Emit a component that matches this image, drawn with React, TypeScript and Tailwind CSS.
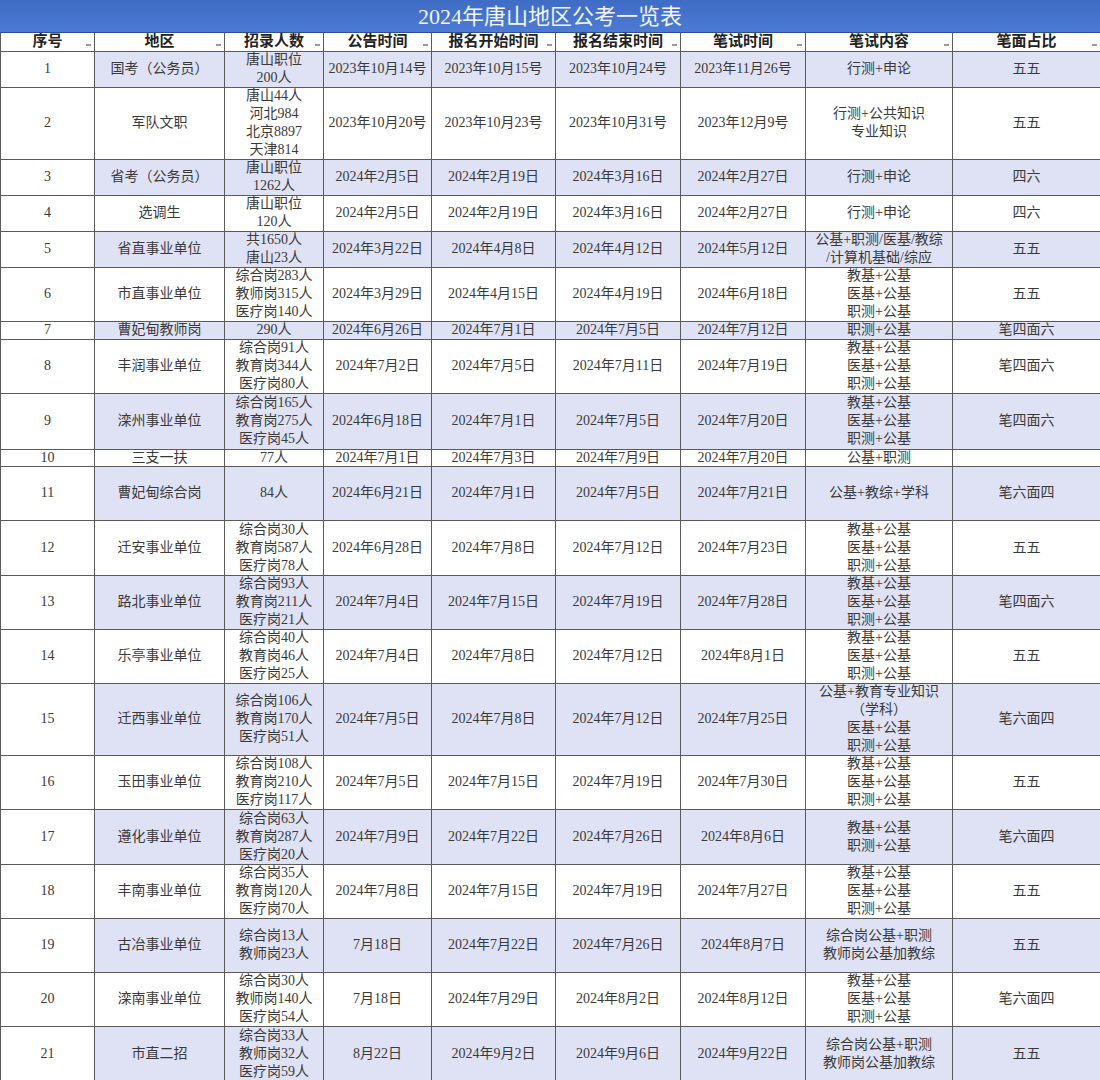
import React from 'react';

type Row = {
  h: string;
  area: string;
  count: string;
  notice: string;
  start: string;
  end: string;
  exam: string;
  content: string;
  ratio: string;
};

const headers = ['序号', '地区', '招录人数', '公告时间', '报名开始时间', '报名结束时间', '笔试时间', '笔试内容', '笔面占比'];

// h = inner height of the row (the 1px grid line comes on top)
const rows: Row[] = [
  { h: 'h-[35px]', area: '国考（公务员）', count: '唐山职位\n200人', notice: '2023年10月14号', start: '2023年10月15号', end: '2023年10月24号', exam: '2023年11月26号', content: '行测+申论', ratio: '五五' },
  { h: 'h-[71px]', area: '军队文职', count: '唐山44人\n河北984\n北京8897\n天津814', notice: '2023年10月20号', start: '2023年10月23号', end: '2023年10月31号', exam: '2023年12月9号', content: '行测+公共知识\n专业知识', ratio: '五五' },
  { h: 'h-[35px]', area: '省考（公务员）', count: '唐山职位\n1262人', notice: '2024年2月5日', start: '2024年2月19日', end: '2024年3月16日', exam: '2024年2月27日', content: '行测+申论', ratio: '四六' },
  { h: 'h-[35px]', area: '选调生', count: '唐山职位\n120人', notice: '2024年2月5日', start: '2024年2月19日', end: '2024年3月16日', exam: '2024年2月27日', content: '行测+申论', ratio: '四六' },
  { h: 'h-[35px]', area: '省直事业单位', count: '共1650人\n唐山23人', notice: '2024年3月22日', start: '2024年4月8日', end: '2024年4月12日', exam: '2024年5月12日', content: '公基+职测/医基/教综\n/计算机基础/综应', ratio: '五五' },
  { h: 'h-[53px]', area: '市直事业单位', count: '综合岗283人\n教师岗315人\n医疗岗140人', notice: '2024年3月29日', start: '2024年4月15日', end: '2024年4月19日', exam: '2024年6月18日', content: '教基+公基\n医基+公基\n职测+公基', ratio: '五五' },
  { h: 'h-[17px]', area: '曹妃甸教师岗', count: '290人', notice: '2024年6月26日', start: '2024年7月1日', end: '2024年7月5日', exam: '2024年7月12日', content: '职测+公基', ratio: '笔四面六' },
  { h: 'h-[53px]', area: '丰润事业单位', count: '综合岗91人\n教育岗344人\n医疗岗80人', notice: '2024年7月2日', start: '2024年7月5日', end: '2024年7月11日', exam: '2024年7月19日', content: '教基+公基\n医基+公基\n职测+公基', ratio: '笔四面六' },
  { h: 'h-[55px]', area: '滦州事业单位', count: '综合岗165人\n教育岗275人\n医疗岗45人', notice: '2024年6月18日', start: '2024年7月1日', end: '2024年7月5日', exam: '2024年7月20日', content: '教基+公基\n医基+公基\n职测+公基', ratio: '笔四面六' },
  { h: 'h-[16px]', area: '三支一扶', count: '77人', notice: '2024年7月1日', start: '2024年7月3日', end: '2024年7月9日', exam: '2024年7月20日', content: '公基+职测', ratio: '' },
  { h: 'h-[53px]', area: '曹妃甸综合岗', count: '84人', notice: '2024年6月21日', start: '2024年7月1日', end: '2024年7月5日', exam: '2024年7月21日', content: '公基+教综+学科', ratio: '笔六面四' },
  { h: 'h-[54px]', area: '迁安事业单位', count: '综合岗30人\n教育岗587人\n医疗岗78人', notice: '2024年6月28日', start: '2024年7月8日', end: '2024年7月12日', exam: '2024年7月23日', content: '教基+公基\n医基+公基\n职测+公基', ratio: '五五' },
  { h: 'h-[53px]', area: '路北事业单位', count: '综合岗93人\n教育岗211人\n医疗岗21人', notice: '2024年7月4日', start: '2024年7月15日', end: '2024年7月19日', exam: '2024年7月28日', content: '教基+公基\n医基+公基\n职测+公基', ratio: '笔四面六' },
  { h: 'h-[53px]', area: '乐亭事业单位', count: '综合岗40人\n教育岗46人\n医疗岗25人', notice: '2024年7月4日', start: '2024年7月8日', end: '2024年7月12日', exam: '2024年8月1日', content: '教基+公基\n医基+公基\n职测+公基', ratio: '五五' },
  { h: 'h-[71px]', area: '迁西事业单位', count: '综合岗106人\n教育岗170人\n医疗岗51人', notice: '2024年7月5日', start: '2024年7月8日', end: '2024年7月12日', exam: '2024年7月25日', content: '公基+教育专业知识\n（学科）\n医基+公基\n职测+公基', ratio: '笔六面四' },
  { h: 'h-[53px]', area: '玉田事业单位', count: '综合岗108人\n教育岗210人\n医疗岗117人', notice: '2024年7月5日', start: '2024年7月15日', end: '2024年7月19日', exam: '2024年7月30日', content: '教基+公基\n医基+公基\n职测+公基', ratio: '五五' },
  { h: 'h-[54px]', area: '遵化事业单位', count: '综合岗63人\n教育岗287人\n医疗岗20人', notice: '2024年7月9日', start: '2024年7月22日', end: '2024年7月26日', exam: '2024年8月6日', content: '教基+公基\n职测+公基', ratio: '笔六面四' },
  { h: 'h-[53px]', area: '丰南事业单位', count: '综合岗35人\n教育岗120人\n医疗岗70人', notice: '2024年7月8日', start: '2024年7月15日', end: '2024年7月19日', exam: '2024年7月27日', content: '教基+公基\n医基+公基\n职测+公基', ratio: '五五' },
  { h: 'h-[53px]', area: '古冶事业单位', count: '综合岗13人\n教师岗23人', notice: '7月18日', start: '2024年7月22日', end: '2024年7月26日', exam: '2024年8月7日', content: '综合岗公基+职测\n教师岗公基加教综', ratio: '五五' },
  { h: 'h-[53px]', area: '滦南事业单位', count: '综合岗30人\n教师岗140人\n医疗岗54人', notice: '7月18日', start: '2024年7月29日', end: '2024年8月2日', exam: '2024年8月12日', content: '教基+公基\n医基+公基\n职测+公基', ratio: '笔六面四' },
  { h: 'h-[55px]', area: '市直二招', count: '综合岗33人\n教师岗32人\n医疗岗59人', notice: '8月22日', start: '2024年9月2日', end: '2024年9月6日', exam: '2024年9月22日', content: '综合岗公基+职测\n教师岗公基加教综', ratio: '五五' },
];

const td = 'border border-[#5a5a5a] p-0 align-middle';

const Cell: React.FC<{ h: string; bg: string; children: React.ReactNode }> = ({ h, bg, children }) => (
  <td className={`${td} ${bg}`}>
    {/* fixed-height box: extra lines spill over the grid line like in the sheet */}
    <div className={`${h} flex flex-col items-center justify-center overflow-visible whitespace-pre-line text-center leading-[18px] text-[14px] text-[#3a3a3a]`}>
      {children}
    </div>
  </td>
);

const App: React.FC = () => {
  return (
    <div className="w-[1100px] h-[1080px] overflow-hidden bg-white font-['Liberation_Serif','Noto_Sans_CJK_SC',serif]">
      {/* title bar */}
      <div className="h-[33px] bg-gradient-to-b from-[#3f6cc4] to-[#4b7bd4] border-b border-[#2f4f8f] text-center text-[22px] leading-[33px] text-[#f2f5ff]">
        2024年唐山地区公考一览表
      </div>

      <table className="w-[1100px] table-fixed border-collapse">
        <colgroup>
          <col className="w-[94px]" />
          <col className="w-[130px]" />
          <col className="w-[99px]" />
          <col className="w-[108px]" />
          <col className="w-[124px]" />
          <col className="w-[125px]" />
          <col className="w-[125px]" />
          <col className="w-[147px]" />
          <col className="w-[148px]" />
        </colgroup>
        <thead>
          <tr>
            {headers.map((h) => (
              <th key={h} className="relative border border-[#5a5a5a] border-t-0 p-0 bg-white text-center text-[15px] leading-[17px] h-[18px] font-bold text-[#222]">
                {h}
                <span className="absolute right-[3px] bottom-[5px] w-[5px] h-[2px] bg-[#9a9a9a]" />
              </th>
            ))}
          </tr>
        </thead>
        <tbody>
          {rows.map((r, i) => {
            const shade = i % 2 === 0 ? 'bg-[#dee2f4]' : 'bg-white';
            return (
              <tr key={i}>
                <Cell h={r.h} bg="bg-white">{i + 1}</Cell>
                <Cell h={r.h} bg={shade}>{r.area}</Cell>
                <Cell h={r.h} bg={shade}>{r.count}</Cell>
                <Cell h={r.h} bg={shade}>{r.notice}</Cell>
                <Cell h={r.h} bg={shade}>{r.start}</Cell>
                <Cell h={r.h} bg={shade}>{r.end}</Cell>
                <Cell h={r.h} bg={shade}>{r.exam}</Cell>
                <Cell h={r.h} bg={shade}>{r.content}</Cell>
                <Cell h={r.h} bg={shade}>{r.ratio}</Cell>
              </tr>
            );
          })}
        </tbody>
      </table>
    </div>
  );
};

export default App;
